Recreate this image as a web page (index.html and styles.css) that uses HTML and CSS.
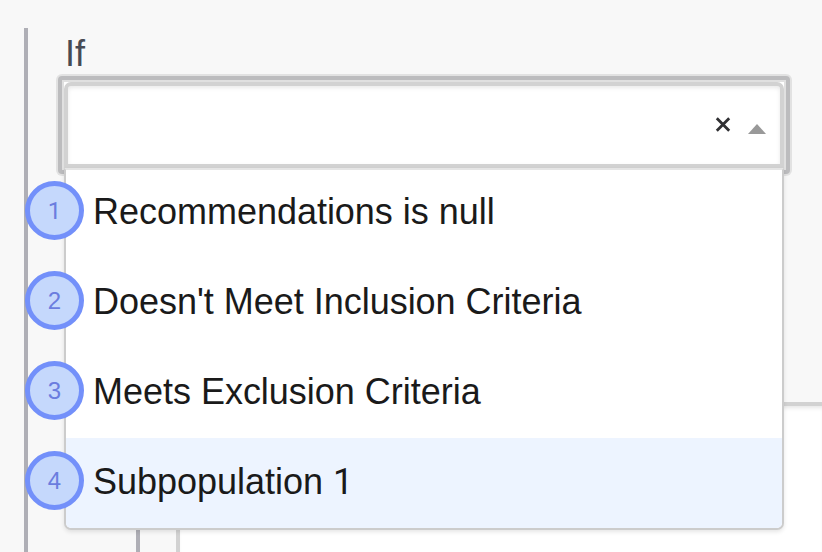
FILE: index.html
```html
<!DOCTYPE html>
<html lang="en">
<head>
<meta charset="utf-8">
<title>Condition</title>
<link rel="stylesheet" href="styles.css">
</head>
<body>
<div class="branch">
  <div class="field">
    <label class="label">If</label>
    <div class="select">
      <div class="control">
        <svg class="clear" viewBox="0 0 16 16"><path d="M1.8 1.3 14.2 13.7M14.2 1.3 1.8 13.7"/></svg>
        <svg class="arrow" viewBox="0 0 18 10"><path d="M0 10 9 0 18 10Z"/></svg>
      </div>
      <div class="menu">
        <div class="option"><span class="badge plain">1</span>Recommendations is null</div>
        <div class="option"><span class="badge">2</span>Doesn't Meet Inclusion Criteria</div>
        <div class="option"><span class="badge">3</span>Meets Exclusion Criteria</div>
        <div class="option focused"><span class="badge">4</span>Subpopulation <span class="plain">1</span></div>
      </div>
    </div>
  </div>
  <div class="nested">
    <div class="panel"></div>
  </div>
</div>
</body>
</html>
```
FILE: styles.css
```css
*, *::before { box-sizing: border-box; }
body {
  margin: 0;
  height: 552px;
  padding: 28px 0 0 24px;
  overflow: hidden;
  background: #f8f8f8;
  font-family: "Liberation Sans", Arial, sans-serif;
}
.branch {
  height: 524px;
  border-left: 4px solid #afafb6;
}
.field {
  height: 374px;
  padding-left: 36px;
}
.label {
  display: block;
  height: 54px;
  padding-left: 1px;
  font-size: 36px;
  line-height: 52px;
  color: #484b54;
}
.select {
  position: relative;
  z-index: 0;
  width: 720px;
}
.select::before {
  content: "";
  position: absolute;
  z-index: -1;
  top: -6px;
  left: -6px;
  width: 732px;
  height: 98px;
  border: 4px solid #bcbcbe;
  border-radius: 4px;
  background: #fff;
  box-shadow: 0 0 0 2px #e2e2e2, inset 0 0 0 2px #e0e0e0;
}
.control {
  display: flex;
  align-items: center;
  justify-content: flex-end;
  height: 86px;
  padding-right: 14px;
  border: 4px solid #d2d2d2;
  border-radius: 7px 7px 0 0;
  background: #fff;
  box-shadow: inset 0 2px 4px rgba(0, 0, 0, .09);
}
.clear {
  width: 16px;
  height: 16px;
  margin-right: 17px;
  fill: none;
  stroke: #303033;
  stroke-width: 2.8;
}
.arrow {
  width: 18px;
  height: 10px;
  margin-top: 8px;
  fill: #999;
}
.menu {
  position: absolute;
  z-index: 1;
  top: 86px;
  left: 0;
  width: 720px;
  border: 2px solid #ccc;
  border-top-color: #e5e5e5;
  border-radius: 0 0 7px 7px;
  background: #fff;
  box-shadow: 0 2px 4px rgba(0, 0, 0, .1);
}
.option {
  position: relative;
  height: 90px;
  padding-left: 27px;
  font-size: 36px;
  line-height: 88px;
  letter-spacing: -.02px;
  color: #1a1a1a;
}
.option:first-child {
  height: 88px;
  line-height: 84px;
}
.focused {
  border-radius: 0 0 5px 5px;
  background: #edf4ff;
}
.option .badge {
  position: absolute;
  bottom: 18px;
  left: -41px;
  width: 59px;
  height: 59px;
  border: 5px solid #7390fa;
  border-radius: 50%;
  background: #c5d8fc;
  color: #6b7ddf;
  font-size: 24px;
  line-height: 50px;
  text-align: center;
}
.plain { font-family: Roboto, "Liberation Sans", sans-serif; }
.nested {
  height: 150px;
  margin-left: 108px;
  padding-left: 36px;
  border-left: 4px solid #afafb6;
}
.panel {
  height: 150px;
  border: solid #d2d2d2;
  border-width: 4px 0 0 4px;
  background: #fff;
  box-shadow: inset 0 4px 4px -2px rgba(0, 0, 0, .1);
}
```
